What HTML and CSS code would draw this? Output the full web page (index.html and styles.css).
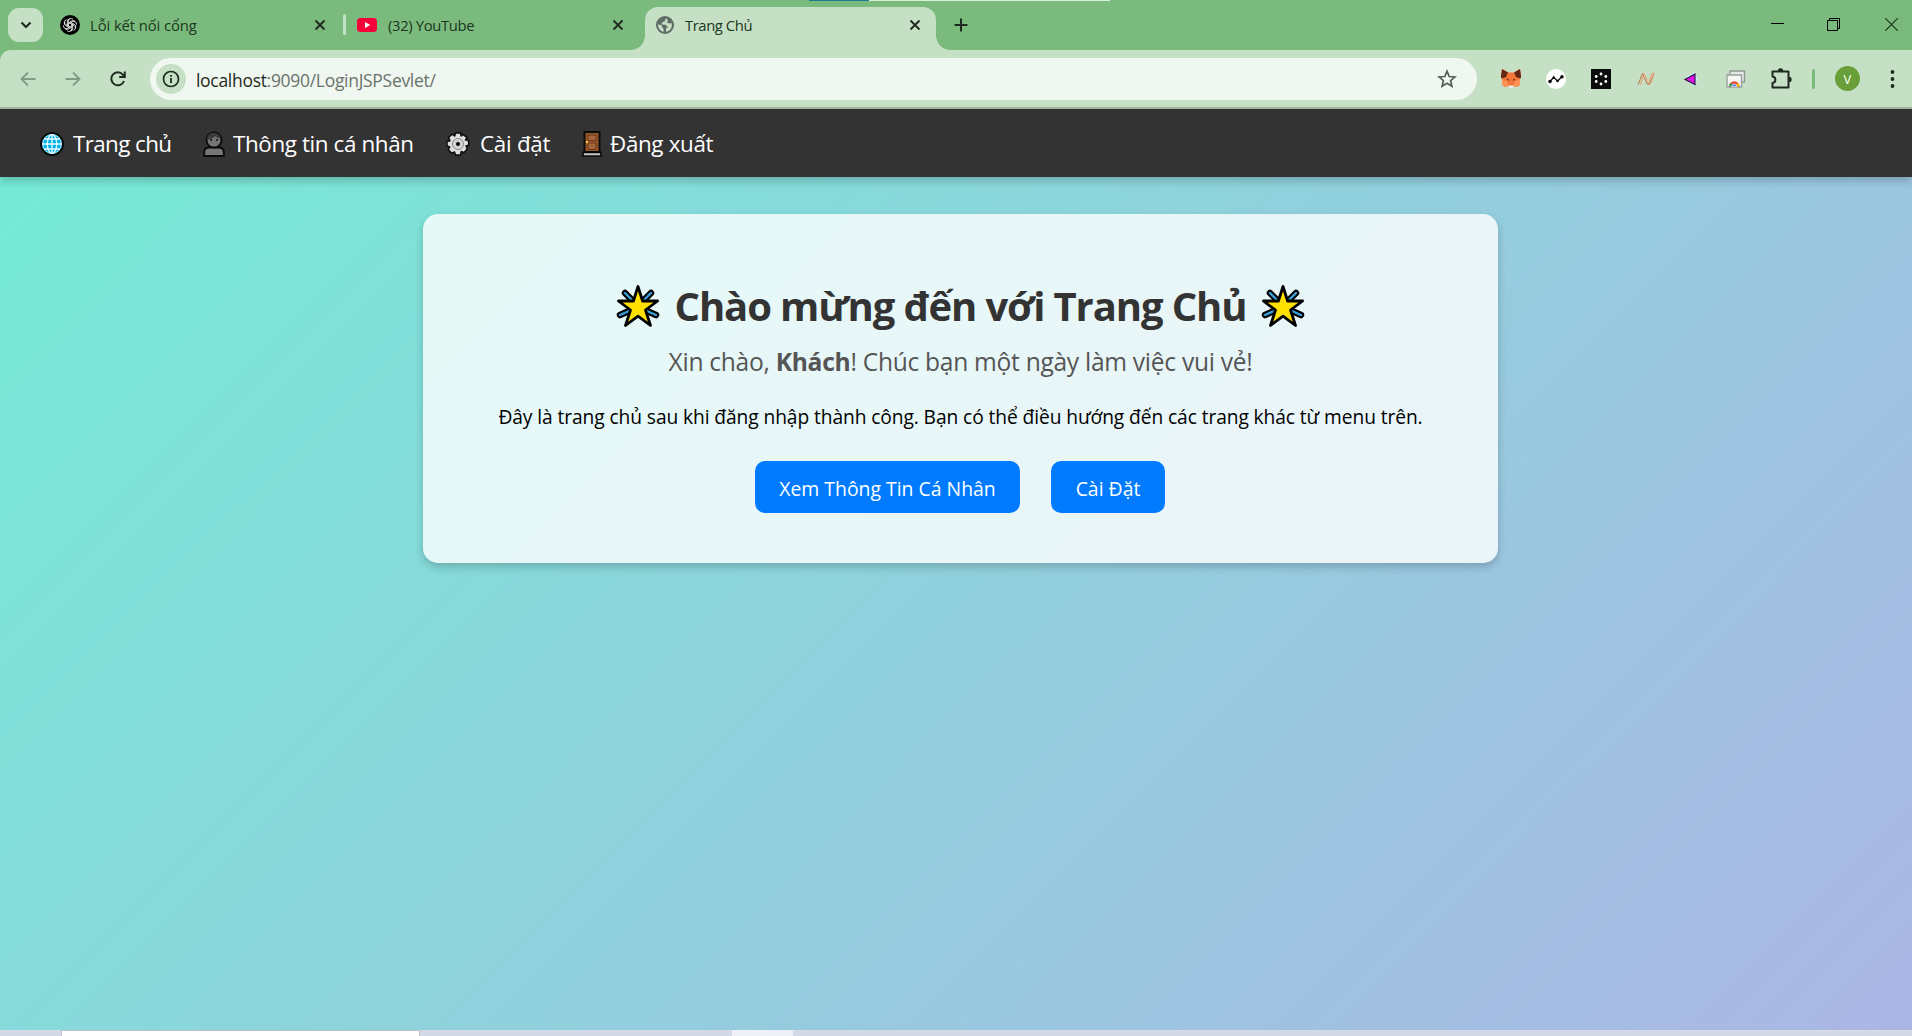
FILE: index.html
```html
<!DOCTYPE html>
<html lang="vi">
<head>
<meta charset="utf-8">
<title>Trang Chủ</title>
<link rel="stylesheet" href="styles.css">
</head>
<body>
<svg class="defs" width="0" height="0" aria-hidden="true">
  <defs>
    <symbol id="close" viewBox="0 0 12 12"><path d="M1.5 1.5l9 9M10.5 1.5l-9 9" fill="none" stroke="#1f2b20" stroke-width="1.9"/></symbol>
    <symbol id="star" viewBox="0 0 44 44">
      <g fill="none" stroke-linecap="round"><g stroke="#000" stroke-width="6.5"><path d="M9 9l7 7M35 9l-7 7M4 31l9-4M40 31l-9-4"/></g><g stroke="#3aa0dc" stroke-width="2.4"><path d="M9 9l7 7M35 9l-7 7M4 31l9-4M40 31l-9-4"/></g></g>
      <path d="M22 2.500L26.600 17h15L29.500 26l5 15.500L22 32.200 9.500 41.500l5-15.500L2.400 17h15z" fill="#ffe000" stroke="#000" stroke-width="2.800" stroke-linejoin="round"/>
    </symbol>
  </defs>
</svg>
<div class="window">
  <header class="tabstrip">
    <span class="edge"><i class="edge-blue"></i><i class="edge-light"></i></span>
    <button class="tab-search"><svg width="12" height="8" viewBox="0 0 12 8"><path d="M1.500 1.500L6 6l4.500-4.500" fill="none" stroke="#1f2b20" stroke-width="2.100"/></svg></button>
    <div class="tab tab-one">
      <svg width="20" height="20" viewBox="0 0 20 20"><circle cx="10" cy="10" r="10"/><g fill="none" stroke="#fff" stroke-width=".8"><path id="petal" d="M8.300 11V6.200a2.700 2.700 0 0 1 4.600-1.900M8.300 7.900l3.400-2a2.700 2.700 0 0 1 3.400.6"/><use href="#petal" transform="rotate(60 10 10)"/><use href="#petal" transform="rotate(120 10 10)"/><use href="#petal" transform="rotate(180 10 10)"/><use href="#petal" transform="rotate(240 10 10)"/><use href="#petal" transform="rotate(300 10 10)"/></g></svg>
      <span class="tab-title t1">Lỗi kết nối cổng</span>
      <svg class="x" width="12" height="12"><use href="#close"/></svg>
    </div>
    <i class="tab-sep"></i>
    <div class="tab tab-two">
      <svg width="20" height="14" viewBox="0 0 20 14"><rect width="20" height="14" rx="3.500" fill="#f5023a"/><path d="M8 4v6l5.200-3z" fill="#fff"/></svg>
      <span class="tab-title t2">(32) YouTube</span>
      <svg class="x" width="12" height="12"><use href="#close"/></svg>
    </div>
    <div class="tab tab-active">
      <svg width="18" height="18" viewBox="0 0 18 18"><circle cx="9" cy="9" r="9" fill="#5f6b66"/><path d="M10.500 2.200c-1 .6-1.600 1.200-1.500 2.200.1.900-.8 1.200-1.800 1.300-1 .2-.5 1.600-1.500 1.700-.6 0-.4 1.100.3 1.200l3.400.1c1.100.1 1 1.600 2 1.700.8.100.9 1-.1 1.200-1.200.2-1.300 1.500-1.300 2.600v1.600c3.500-.4 5.900-3.300 5.900-6.800 0-.8-.1-1.500-.4-2.200-.6 1-1.600.9-2.400.4-.7-.5-1.700.1-2-.7-.2-.7.900-.9.800-1.800z" fill="#c5e0c5"/><path d="M2.100 8.300c2 .5 4.400 1.300 4.400 3.100 0 1 1 .9 1.100 1.900v2.500C4.300 15.300 1.900 12.400 2.100 8.300z" fill="#c5e0c5"/></svg>
      <span class="tab-title t3">Trang Chủ</span>
      <svg class="x" width="12" height="12"><use href="#close"/></svg>
    </div>
    <svg class="plus" width="14" height="14" viewBox="0 0 14 14"><path d="M7 .5v13M.5 7h13" stroke="#1f2b20" stroke-width="2"/></svg>
    <div class="controls">
      <svg width="13" height="13" viewBox="0 0 13 13"><path d="M0 5.500h13" stroke="#000"/></svg>
      <svg class="restore" width="13" height="13" viewBox="0 0 13 13" fill="none" stroke="#000"><path d="M.5 2.500h10v10H.5zM2.500 2.500v-2h10v10h-2"/></svg>
      <svg width="13" height="13" viewBox="0 0 13 13"><path d="M.3.3l12.400 12.400M12.700.3L.3 12.700" stroke="#1b2e1b" stroke-width="1.100"/></svg>
    </div>
  </header>

  <div class="toolbar">
    <div class="nav-buttons">
      <svg width="16" height="16" viewBox="0 0 16 16" fill="none" stroke="#839c85" stroke-width="1.800"><path d="M15.500 8H2M8 1.500L1.500 8 8 14.500"/></svg>
      <svg width="16" height="16" viewBox="0 0 16 16" fill="none" stroke="#839c85" stroke-width="1.800"><path d="M.5 8H14M8 1.500L14.500 8 8 14.500"/></svg>
      <svg width="16" height="16" viewBox="0 0 16 16" fill="none" stroke="#1f2b20" stroke-width="2"><path d="M14 10a6.500 6.500 0 1 1-1.200-6.400L14.500 5.500M14.800.5v5.600H9.200"/></svg>
    </div>
    <div class="urlbar">
      <span class="info"><svg width="18" height="18" viewBox="0 0 18 18"><circle cx="9" cy="9" r="7.500" fill="none" stroke="#1f2b20" stroke-width="1.700"/><path d="M9 8v5M9 5v1.800" stroke="#1f2b20" stroke-width="1.800"/></svg></span>
      <span class="url"><b>localhost</b>:9090/LoginJSPSevlet/</span>
      <svg class="bookmark" width="20" height="20" viewBox="0 0 20 20"><path d="M10 2.200l2.200 5.300 5.700.5-4.300 3.700 1.300 5.600-4.900-3-4.900 3 1.300-5.600L2.100 8l5.700-.5z" fill="none" stroke="#536056" stroke-width="1.700"/></svg>
    </div>
    <div class="extensions">
      <span><svg width="20" height="19" viewBox="0 0 20 19"><path d="M1 0l6 3.500h6L19 0l1 7-1.500 4 .5 4.500-2.500 2.500-4-1-1.500 1.500H9L7.500 17l-4 1L1 15.500 1.500 11 0 7z" fill="#f6763a"/><path d="M1 0l6 3.500L5 8 .3 9.500 0 7zM19 0l-6 3.500L15 8l4.700 1.500L20 7z" fill="#642713"/><path d="M1 11l5 1 1.500 5-4 1L1 15.500zM19 11l-5 1-1.500 5 4 1 2.500-2.500z" fill="#ff9454"/><path d="M5.500 9.500l2.500 1-.5 1.500zM14.500 9.500l-2.500 1 .5 1.500z" fill="#321"/><path d="M7.500 16.500h5L11.500 19h-3z" fill="#eee"/></svg></span>
      <span><svg width="20" height="20" viewBox="0 0 20 20"><circle cx="10" cy="10" r="10" fill="#fff"/><path d="M4 12.500l3.700-4.200L11.500 12 16 7.800" fill="none" stroke="#111" stroke-width="1.300"/><circle cx="4" cy="12.500" r="1.800"/><circle cx="7.700" cy="8.300" r="1.100"/><circle cx="11.500" cy="12" r="1.200"/><circle cx="16" cy="7.800" r="1.700"/></svg></span>
      <span><svg width="20" height="20" viewBox="0 0 20 20"><path d="M0 0h20v20H0z" fill="#0b0d0c"/><g fill="#fff"><circle cx="10" cy="5" r="1.400"/><circle cx="14.800" cy="7.500" r="1.400"/><circle cx="14.800" cy="12.500" r="1.400"/><circle cx="10" cy="15" r="1.400"/><circle cx="5.200" cy="12.500" r="1.400"/><circle cx="5.200" cy="7.500" r="1.400"/></g></svg></span>
      <span><svg width="18" height="14" viewBox="0 0 18 14" fill="none" stroke-width=".9"><path d="M1 13L5.500 1.500 10 12l2 .5L17 1.500" stroke="#b5713f"/><path d="M3.500 13L7 1.500 12 12.500M12 9l3-7.500 2 0L13.500 12" stroke="#f29363"/></svg></span>
      <span><svg width="16" height="16" viewBox="0 0 16 16"><path d="M4 5l8-4 1 4 2 3-2 3-1 4-6-3z" fill="#c9f4fb"/><path d="M2 8.500L12 3v10.500z" fill="#e315e8" stroke="#27143b" stroke-width="1.100"/></svg></span>
      <span><svg width="20" height="18" viewBox="0 0 20 18"><path d="M4 1h14.500v11H4z" fill="#e1e7e3" stroke="#919a93" stroke-width="1.400"/><path d="M1 5h14.500v12H1z" fill="#f7f7f7" stroke="#9aa09b" stroke-width="1.400"/><path d="M3 16.500a5.300 5.300 0 0 1 10.600 0z" fill="#ea4335"/><path d="M3 16.500a5.300 5.300 0 0 1 1.500-3.700l3.800 3.700z" fill="#34a853"/><path d="M13.600 16.500a5.300 5.300 0 0 0-1.500-3.700l-3.800 3.700z" fill="#fbbc05"/><path d="M5.700 16.500a2.600 2.600 0 0 1 5.200 0z" fill="#4285f4" stroke="#fff" stroke-width=".6"/></svg></span>
      <span><svg width="22" height="22" viewBox="0 0 22 22"><path d="M2.500 3.500h16v16h-16v-4.500c3.800-.4 3.800-6 0-6.400z" fill="none" stroke="#1f2b20" stroke-width="2" stroke-linejoin="round"/><path d="M7.800 3a2.700 2.700 0 0 1 5.400 0zM19 8.800a2.700 2.700 0 0 1 0 5.400z" fill="#1f2b20"/></svg></span>
    </div>
    <i class="toolbar-sep"></i>
    <span class="avatar">V</span>
    <svg class="more" width="20" height="20" viewBox="0 0 20 20" fill="#1f2b20"><circle cx="10.500" cy="3" r="1.900"/><circle cx="10.500" cy="10" r="1.900"/><circle cx="10.500" cy="17" r="1.900"/></svg>
  </div>

  <div class="page">
    <nav class="navbar">
      <a class="link l1"><svg width="24" height="24" viewBox="0 0 24 24"><circle cx="12" cy="12" r="11" fill="#00b3f0" stroke="#0b0b0b" stroke-width="2"/><g fill="none" stroke="#e9fbff" stroke-width="1.300"><circle cx="12" cy="12" r="9.400" stroke-width=".8"/><ellipse cx="12" cy="12" rx="4.700" ry="9.400"/><path d="M12 2.600v18.800M2.600 12h18.800M4.200 7h15.600M4.200 17h15.600"/></g></svg><span>Trang chủ</span></a>
      <a class="link l2"><svg width="22" height="26" viewBox="0 0 22 26"><path d="M1.200 25v-3.500c0-3.500 2-5 5-5h9.600c3 0 5 1.500 5 5V25z" fill="#767676" stroke="#0b0b0b" stroke-width="1.900"/><circle cx="11" cy="9" r="7.500" fill="#767676" stroke="#0b0b0b" stroke-width="1.900"/><path d="M4 7.500C4.500 3.500 8 1.500 11 1.800c3.500.2 6.300 2.500 7 5.700-3 0-4.500-1-5.500-2.500C10 7 7.500 8.500 4 8.500z" fill="#3b3b3b"/><circle cx="8.200" cy="9" r="1" fill="#111"/><circle cx="13.800" cy="9" r="1" fill="#111"/></svg><span>Thông tin cá nhân</span></a>
      <a class="link l3"><svg width="24" height="24" viewBox="0 0 24 24"><path d="M9.500 1h5l.7 3 1.500-1.700 4.300 3L19.500 8h2.700l.8 5-3 1 1.300 3-3.500 3.700-2.500-1.200-.8 3.500h-5l-1-3-2.700 1.200-3.500-3.500L3.700 15 1 14V9.500l3-.8L2.500 5.500l3.700-3.300L8.700 4z" fill="#dedede" stroke="#0b0b0b" stroke-width="1.500" stroke-linejoin="round"/><circle cx="12" cy="12" r="5.600" fill="#d2d2d2" stroke="#858585" stroke-width=".9"/><circle cx="12" cy="12" r="2" fill="#000"/></svg><span>Cài đặt</span></a>
      <a class="link l4"><svg width="20" height="26" viewBox="0 0 20 26"><path d="M2.500 1h15v20h-15z" fill="#95552d" stroke="#0b0b0b" stroke-width="1.900"/><path d="M6 4h8v5.500H6zM6 12h8v6.500H6z" fill="#a5643a" stroke="#6e3817" stroke-width=".9"/><circle cx="5" cy="11" r="1.200" fill="#ffc83d"/><path d="M1 21.300h18V25H1z" fill="#c9c9c9" stroke="#0b0b0b" stroke-width="1.700"/></svg><span>Đăng xuất</span></a>
    </nav>
    <main class="card">
      <h1><svg width="44" height="44"><use href="#star"/></svg><span>Chào mừng đến với Trang Chủ</span><svg width="44" height="44"><use href="#star"/></svg></h1>
      <p class="welcome">Xin chào, <strong>Khách</strong>! Chúc bạn một ngày làm việc vui vẻ!</p>
      <p class="intro">Đây là trang chủ sau khi đăng nhập thành công. Bạn có thể điều hướng đến các trang khác từ menu trên.</p>
      <div class="actions"><a class="btn b1">Xem Thông Tin Cá Nhân</a><a class="btn b2">Cài Đặt</a></div>
    </main>
  </div>
  <footer class="taskbar"><i class="task-search"></i><i class="task-active"></i></footer>
</div>
</body>
</html>
```
FILE: styles.css
```css
* { box-sizing: border-box; }
body { margin: 0; font-family: "Open Sans", "Noto Sans", sans-serif; overflow: hidden; }
svg { display: block; flex: none; }
.defs { position: absolute; }
.window { display: flex; flex-direction: column; height: 1036px; background: #7abb7d; }

.tabstrip { position: relative; display: flex; align-items: flex-end; height: 50px; flex: none; }
.edge { position: absolute; top: 0; left: 809px; display: flex; }
.edge i { height: 1px; }
.edge-blue { width: 60px; background: #1e7b90; }
.edge-light { width: 241px; background: #d8efd9; }
.tab-search { display: flex; align-items: center; justify-content: center; width: 35px; height: 34px; margin: 0 0 8px 8px; padding: 0; border: 0; border-radius: 11px; background: #c5e0c5; }
.tab { display: flex; align-items: center; height: 42px; padding-bottom: 8px; }
.tab-title { font-size: 14.8px; color: #1c3620; white-space: nowrap; }
.t1 { letter-spacing: -.08px; }
.t2 { letter-spacing: -.34px; }
.t3 { letter-spacing: -.42px; }
.tab .x { margin-left: auto; }
.tab-one { width: 283px; margin-left: 17px; padding-right: 17px; }
.tab-one .tab-title { margin-left: 10px; }
.tab-sep { width: 3px; height: 21px; border-radius: 2px; background: #c5e0c5; margin-bottom: 15px; }
.tab-two { width: 299px; padding-left: 11px; padding-right: 21px; }
.tab-two .tab-title { margin-left: 11px; }
.tab-active { position: relative; width: 291px; height: 43px; padding: 0 15px 7px 11px; background: #c5e0c5; border-radius: 13px 13px 0 0; }
.tab-active .tab-title { margin-left: 11px; }
.tab-active::before, .tab-active::after { content: ""; position: absolute; bottom: 0; width: 14px; height: 14px; }
.tab-active::before { right: 100%; background: radial-gradient(circle at 0 0, transparent 13.500px, #c5e0c5 14px); }
.tab-active::after { left: 100%; background: radial-gradient(circle at 100% 0, transparent 13.500px, #c5e0c5 14px); }
.plus { margin: 0 0 18px 18px; }
.controls { display: flex; gap: 43px; margin: 0 14px 19px auto; }
.restore { margin-right: 2px; }

.toolbar { display: flex; align-items: center; height: 59px; flex: none; background: #c5e0c5; border-bottom: 2px solid #a0b4a0; border-top-left-radius: 11px; }
.nav-buttons { display: flex; gap: 29px; width: 150px; padding-left: 20px; }
.urlbar { display: flex; align-items: center; width: 1327px; height: 42px; border-radius: 21px; padding: 0 20px 0 6px; background: #f0f7f1; }
.info { display: grid; place-items: center; width: 30px; height: 30px; border-radius: 50%; background: #c5e0c5; }
.url { margin-left: 10px; padding-top: 2px; font-size: 17.5px; letter-spacing: -.3px; color: #6a736c; white-space: nowrap; }
.url b { font-weight: 400; color: #1f2b20; }
.bookmark { margin-left: auto; }
.extensions { display: flex; margin-left: 11px; }
.extensions span { display: grid; place-items: center; width: 45px; height: 30px; }
.toolbar-sep { width: 3px; height: 20px; margin-left: 9px; border-radius: 2px; background: #7abb7d; }
.avatar { display: grid; place-items: center; width: 25px; height: 25px; margin-left: 20px; border-radius: 50%; background: #689f38; color: #fff; font-size: 13px; }
.more { margin-left: 22px; }

.page { flex: 1; min-height: 0; overflow: hidden; background: linear-gradient(135deg, #74ebd5, #acb6e5); }
.navbar { display: flex; align-items: center; height: 68px; padding: 1px 0 0 40px; background: #333; box-shadow: 0 4px 8px rgba(0, 0, 0, .2); }
.link { display: flex; align-items: center; height: 30px; color: #fff; font-size: 22.4px; line-height: 30px; white-space: nowrap; }
.link svg { margin-right: 9px; }
.l1 { width: 163px; letter-spacing: -.6px; }
.l2 { width: 243px; letter-spacing: -.38px; }
.l2 svg { margin-right: 8px; }
.l3 { width: 136px; letter-spacing: -.28px; }
.l3 svg { margin-right: 10px; }
.l4 { letter-spacing: -.35px; }
.l4 svg { margin-right: 8px; }

.card { width: 1075px; height: 349px; margin: 37px 0 0 423px; padding-top: 65px; border-radius: 15px; background: rgba(255, 255, 255, .8); box-shadow: 0 4px 8px rgba(0, 0, 0, .2); text-align: center; }
.card h1 { display: flex; justify-content: center; align-items: center; gap: 15px; margin: 0; color: #333; font-size: 40px; letter-spacing: -1.1px; line-height: 54px; white-space: nowrap; }
.card p { margin: 0; white-space: nowrap; }
.card .welcome { margin-top: 12px; font-size: 24.6px; letter-spacing: -.29px; line-height: 34px; color: #555; }
.card .intro { margin-top: 25px; font-size: 19.2px; letter-spacing: -.09px; line-height: 26px; color: #000; }
.actions { display: flex; justify-content: center; gap: 31px; margin: 31px 1px 0 0; }
.btn { display: flex; align-items: center; justify-content: center; height: 52px; padding-top: 4px; border-radius: 10px; background: #007bff; color: #fff; font-size: 19.4px; line-height: 26px; white-space: nowrap; }
.b1 { width: 265px; }
.b2 { width: 114px; }

.taskbar { display: flex; height: 6px; flex: none; background: #d3d9e6; }
.task-search { width: 359px; margin-left: 61px; background: #fff; border: 1px solid #bfc3c9; border-bottom: 0; }
.task-active { width: 61px; margin-left: 312px; background: #eef0f5; }
```
